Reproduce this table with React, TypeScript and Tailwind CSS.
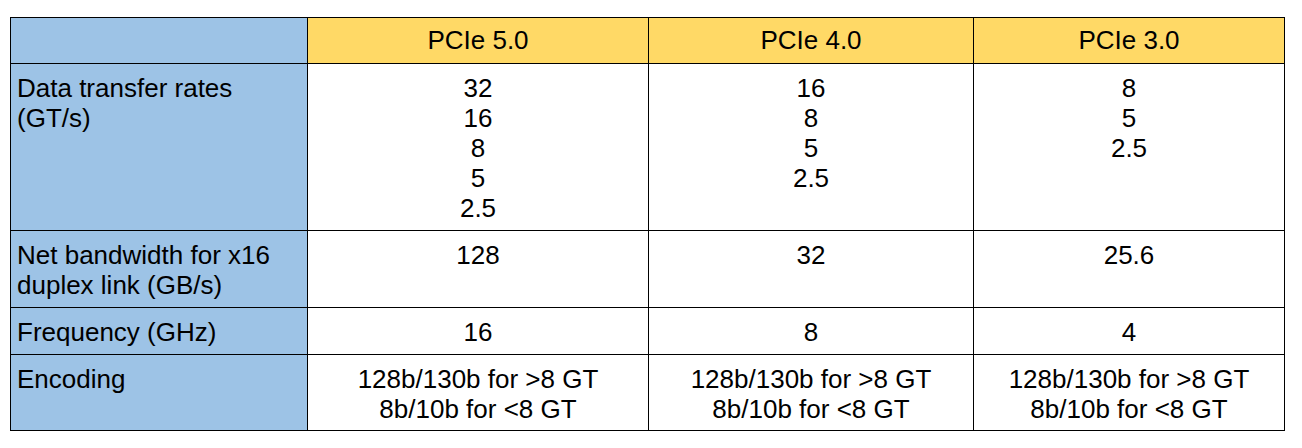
import React from 'react';

const columns = ['PCIe 5.0', 'PCIe 4.0', 'PCIe 3.0'];

const rows: { label: string[]; values: string[][]; h: string }[] = [
  {
    label: ['Data transfer rates', '(GT/s)'],
    values: [
      ['32', '16', '8', '5', '2.5'],
      ['16', '8', '5', '2.5'],
      ['8', '5', '2.5'],
    ],
    h: 'h-[167px]',
  },
  {
    label: ['Net bandwidth for x16', 'duplex link (GB/s)'],
    values: [['128'], ['32'], ['25.6']],
    h: 'h-[77px]',
  },
  {
    label: ['Frequency (GHz)'],
    values: [['16'], ['8'], ['4']],
    h: 'h-[47px]',
  },
  {
    label: ['Encoding'],
    values: [
      ['128b/130b for >8 GT', '8b/10b for <8 GT'],
      ['128b/130b for >8 GT', '8b/10b for <8 GT'],
      ['128b/130b for >8 GT', '8b/10b for <8 GT'],
    ],
    h: 'h-[76px]',
  },
];

export default function App() {
  return (
    <div className="w-[1302px] h-[448px] bg-white pt-[17px] pl-[10px] font-['Liberation_Sans',Arial,sans-serif] text-[26px] leading-[30px] text-black">
      <div className="grid w-fit grid-cols-[297px_341px_325px_311px] border-t border-l border-black">
        {/* Header */}
        <div className="h-[46px] bg-[#9dc3e6] border-r border-b border-black" />
        {columns.map((c) => (
          <div
            key={c}
            className="h-[46px] bg-[#ffd966] border-r border-b border-black flex items-center justify-center pb-[1px]"
          >
            {c}
          </div>
        ))}

        {/* Body */}
        {rows.map((row) => (
          <React.Fragment key={row.label[0]}>
            <div className={`${row.h} bg-[#9dc3e6] border-r border-b border-black pt-[9px] pl-[6px]`}>
              {row.label.map((l) => (
                <div key={l}>{l}</div>
              ))}
            </div>
            {row.values.map((vals, i) => (
              <div
                key={i}
                className={`${row.h} bg-white border-r border-b border-black pt-[9px] text-center`}
              >
                {vals.map((v, j) => (
                  <div key={j}>{v}</div>
                ))}
              </div>
            ))}
          </React.Fragment>
        ))}
      </div>
    </div>
  );
}
